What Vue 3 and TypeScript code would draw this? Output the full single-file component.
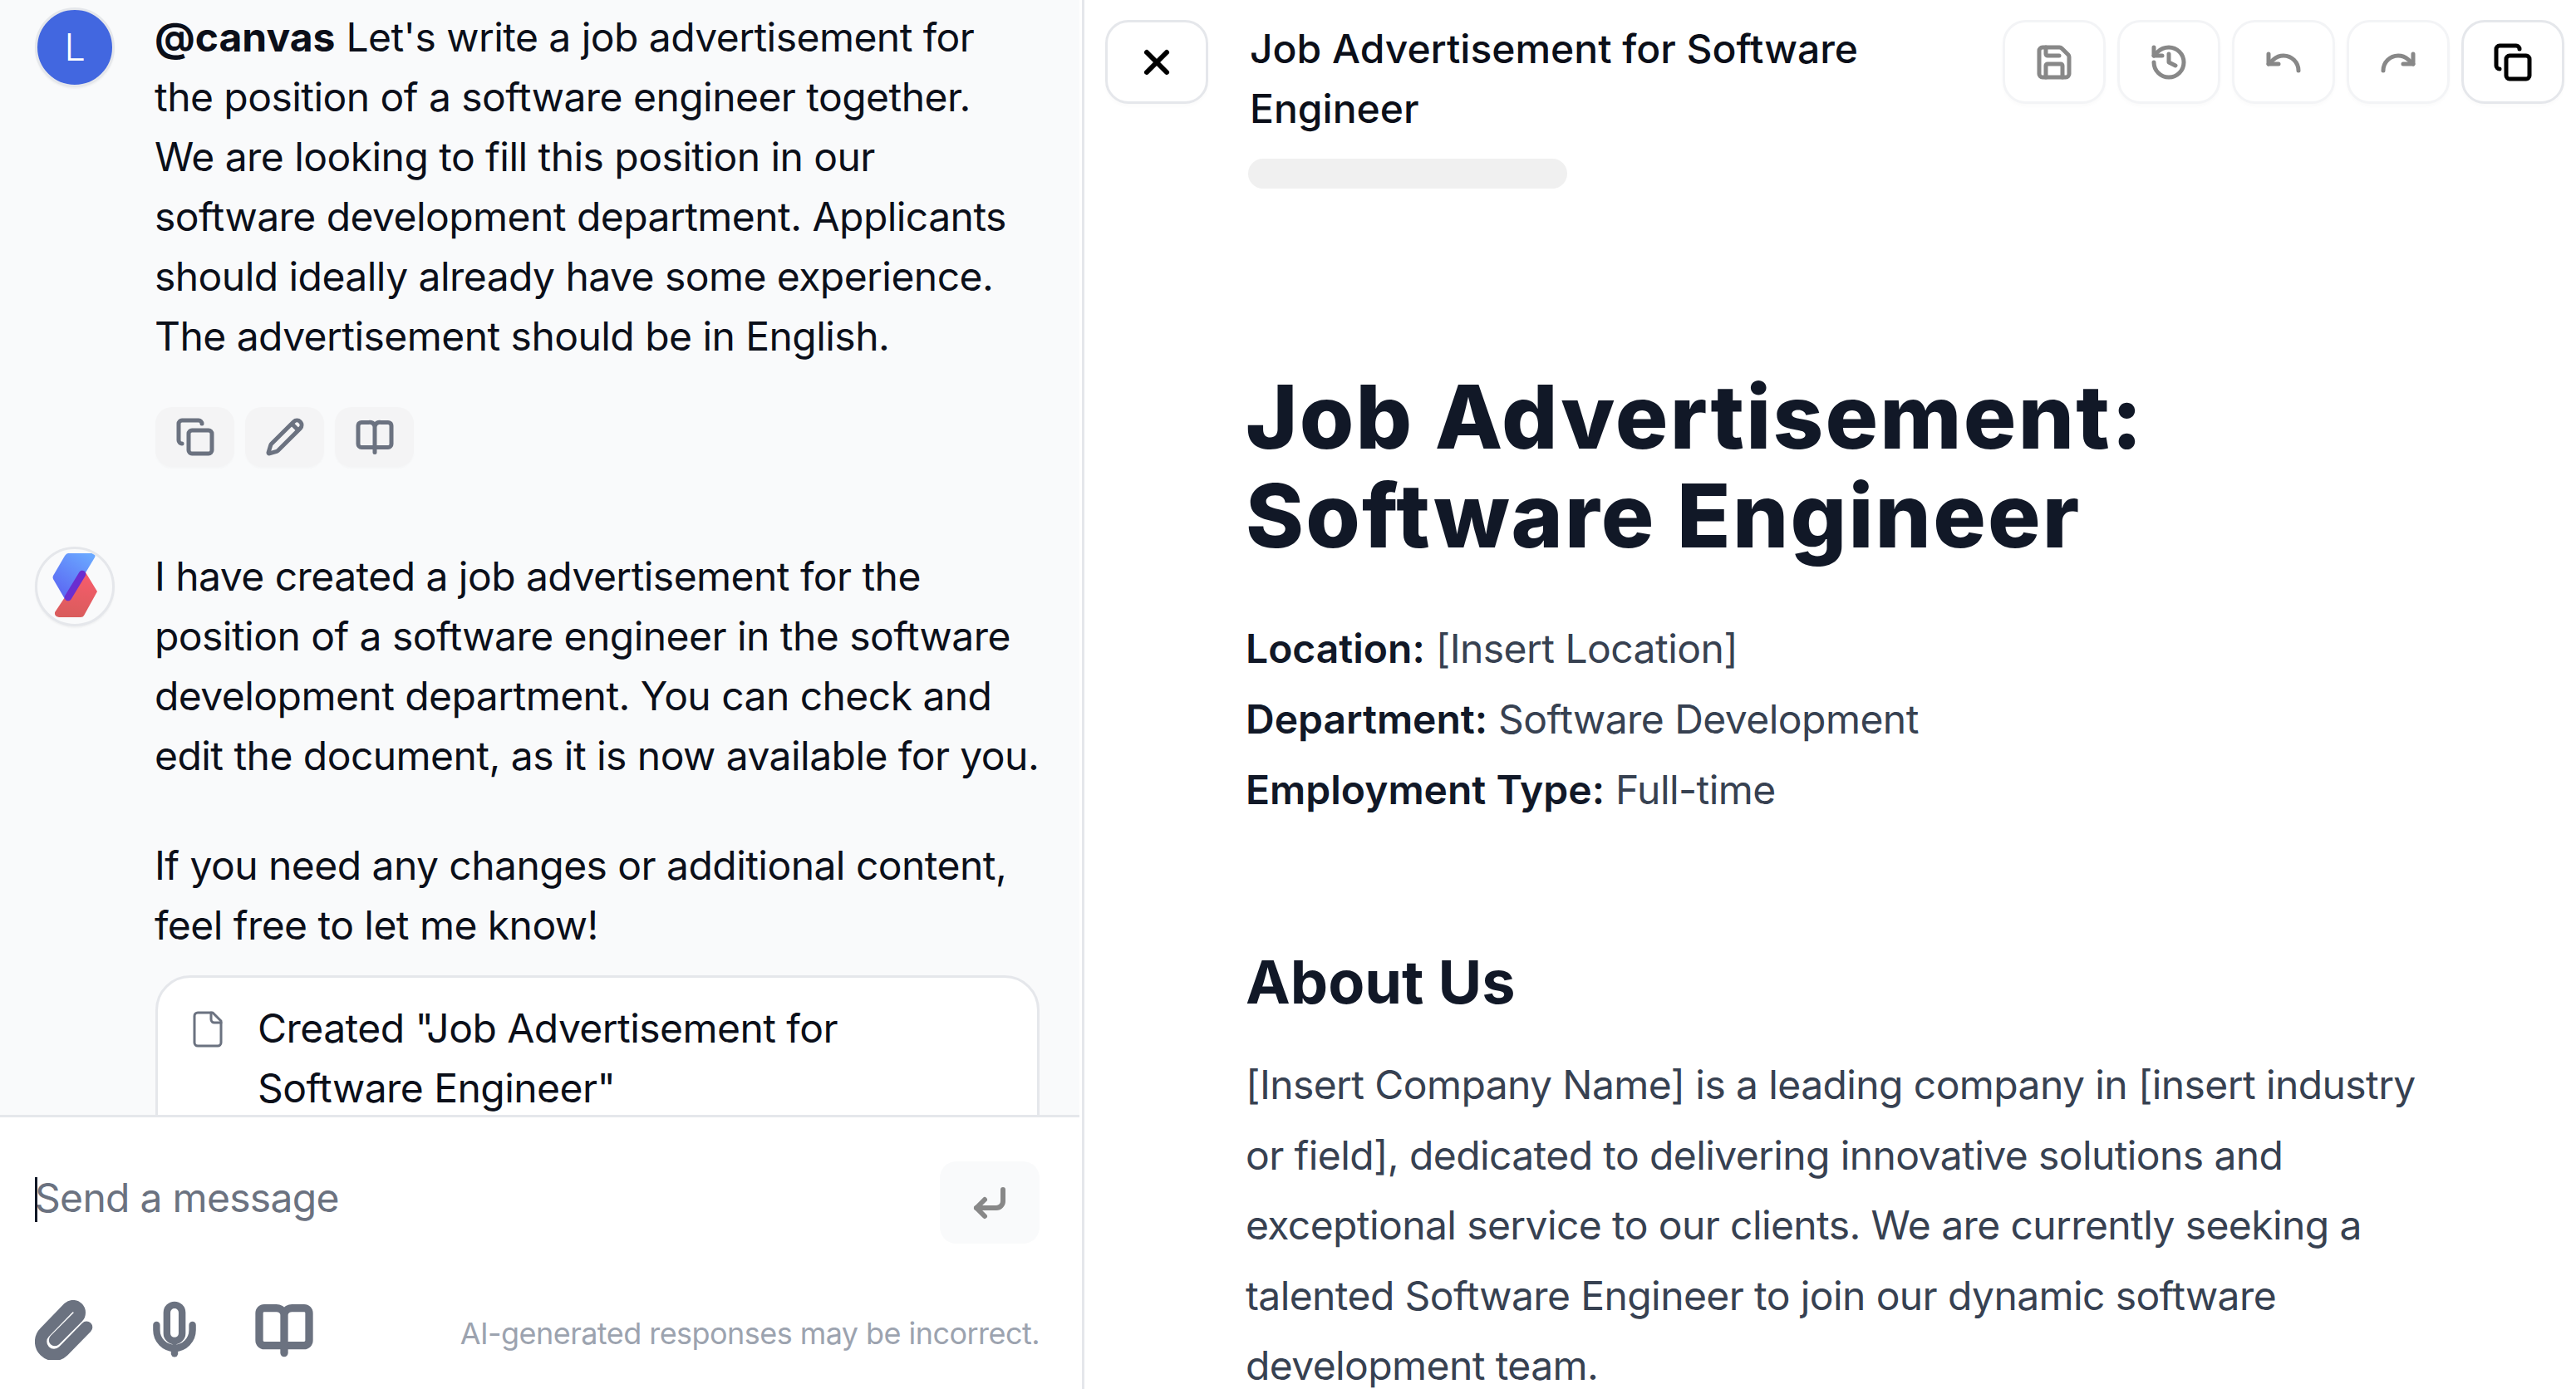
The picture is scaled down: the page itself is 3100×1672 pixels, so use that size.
<template>
  <div class="app">
    <section class="chat">
      <div class="thread">
        <article class="msg">
          <div class="avatar user">L</div>
          <div class="body">
            <p class="prompt"><strong>@canvas</strong> Let's write a job advertisement for the position of a software engineer together. We are looking to fill this position in our software development department. Applicants should ideally already have some experience. The advertisement should be in English.</p>
            <div class="msg-actions">
              <button v-for="name in msgActions" :key="name" class="msg-btn">
                <svg class="ic" viewBox="0 0 24 24"><path v-for="d in icons[name]" :key="d" :d="d" /></svg>
              </button>
            </div>
          </div>
        </article>

        <article class="msg reply">
          <div class="avatar bot">
            <svg viewBox="0 0 90 90" class="logo">
              <defs>
                <linearGradient id="lg-blue" x1="0.8" y1="0" x2="0.2" y2="1">
                  <stop offset="0" stop-color="#6aa8ff" />
                  <stop offset="1" stop-color="#5a63f2" />
                </linearGradient>
                <linearGradient id="lg-red" x1="0.6" y1="0" x2="0.5" y2="1">
                  <stop offset="0" stop-color="#f85c6c" />
                  <stop offset="1" stop-color="#d95c5c" />
                </linearGradient>
              </defs>
              <path fill="url(#lg-red)" d="M58 28 L72 51 L56 80 Q55 82 52 82 L26 82 Q20 81 21 76 L33 58 Z" />
              <path fill="url(#lg-blue)" d="M37 5 L66 5 Q71 6 69 10 L39 60 Q36 63 33 60 L19 36 Q18 34 19 32 L33 8 Q35 5 37 5 Z" />
              <path d="M54 30 L37 58" stroke="#6a2ed0" stroke-width="8.5" stroke-linecap="round" fill="none" />
            </svg>
          </div>
          <div class="body">
            <p>I have created a job advertisement for the position of a software engineer in the software development department. You can check and edit the document, as it is now available for you.</p>
            <p class="para">If you need any changes or additional content, feel free to let me know!</p>
            <div class="doc-card">
              <svg class="ic thin" viewBox="0 0 24 24"><path v-for="d in icons.file" :key="d" :d="d" /></svg>
              <span>Created "Job Advertisement for Software Engineer"</span>
            </div>
          </div>
        </article>
      </div>

      <footer class="composer">
        <div class="input-row">
          <div class="input"><i class="caret"></i>Send a message</div>
          <button class="send">
            <svg class="ic" viewBox="0 0 24 24"><path v-for="d in icons.enter" :key="d" :d="d" /></svg>
          </button>
        </div>
        <div class="tools-row">
          <div class="tools">
            <svg v-for="name in composerTools" :key="name" class="tool" :class="name" viewBox="0 0 24 24"><path v-for="d in icons[name]" :key="d" :d="d" /></svg>
          </div>
          <span class="note">AI-generated responses may be incorrect.</span>
        </div>
      </footer>
    </section>

    <section class="canvas">
      <header class="bar">
        <button class="bar-btn strong">
          <svg class="ic x" viewBox="0 0 24 24"><path v-for="d in icons.close" :key="d" :d="d" /></svg>
        </button>
        <div class="title-wrap">
          <div class="title">Job Advertisement for Software Engineer</div>
          <div class="pill"></div>
        </div>
        <div class="bar-actions">
          <button v-for="name in barActions" :key="name" class="bar-btn">
            <svg class="ic" viewBox="0 0 24 24"><path v-for="d in icons[name]" :key="d" :d="d" /></svg>
          </button>
          <button class="bar-btn strong">
            <svg class="ic dark" viewBox="0 0 24 24"><path v-for="d in icons.copy" :key="d" :d="d" /></svg>
          </button>
        </div>
      </header>

      <main class="doc">
        <h1>Job Advertisement: Software Engineer</h1>
        <div class="meta">
          <p v-for="row in meta" :key="row.label"><strong>{{ row.label }}:</strong> {{ row.value }}</p>
        </div>
        <h2>About Us</h2>
        <p class="copy">[Insert Company Name] is a leading company in [insert industry or field], dedicated to delivering innovative solutions and exceptional service to our clients. We are currently seeking a talented Software Engineer to join our dynamic software development team.</p>
      </main>
    </section>
  </div>
</template>

<script setup lang="ts">
const icons: Record<string, string[]> = {
  copy: [
    'M10 8h10a2 2 0 0 1 2 2v10a2 2 0 0 1-2 2H10a2 2 0 0 1-2-2V10a2 2 0 0 1 2-2Z',
    'M4 16c-1.1 0-2-.9-2-2V4c0-1.1.9-2 2-2h10c1.1 0 2 .9 2 2',
  ],
  pencil: [
    'M21.17 6.81a2.8 2.8 0 0 0-3.98-3.98L3.84 16.17a2 2 0 0 0-.5.83l-1.32 4.35a.5.5 0 0 0 .62.62l4.35-1.32a2 2 0 0 0 .83-.5z',
    'M16.5 4.5l3 3',
  ],
  book: [
    'M4 3.2h4.5a3.5 3.5 0 0 1 3.5 2 3.5 3.5 0 0 1 3.5-2H20a2 2 0 0 1 2 2v11a2 2 0 0 1-2 2H4a2 2 0 0 1-2-2V5.2a2 2 0 0 1 2-2Z',
    'M12 5.5v15.7',
  ],
  file: ['M15 2H6a2 2 0 0 0-2 2v16a2 2 0 0 0 2 2h12a2 2 0 0 0 2-2V7Z', 'M14 2v4a2 2 0 0 0 2 2h4'],
  enter: ['M20 4v7a4 4 0 0 1-4 4H4', 'm9 10-5 5 5 5'],
  clip: ['M20.7 10.9 11.42 20.42A5.3 5.3 0 0 1 3.92 12.92L13.53 3.03A2.65 2.65 0 0 1 17.27 6.77L8 16.05'],
  mic: [
    'M12 1.95a3.05 3.05 0 0 0-3.05 3.05v8.3a3.05 3.05 0 0 0 6.1 0V5A3.05 3.05 0 0 0 12 1.95Z',
    'M19.2 10v2a7.2 7.3 0 0 1-14.4 0v-2',
    'M12 19v2.4',
  ],
  close: ['M18 6 6 18', 'm6 6 12 12'],
  save: [
    'M15.2 3a2 2 0 0 1 1.4.6l3.8 3.8a2 2 0 0 1 .6 1.4V19a2 2 0 0 1-2 2H5a2 2 0 0 1-2-2V5a2 2 0 0 1 2-2z',
    'M17 21v-7a1 1 0 0 0-1-1H8a1 1 0 0 0-1 1v7',
    'M7 3v4a1 1 0 0 0 1 1h7',
  ],
  history: ['M3 12a9 9 0 1 0 9-9 9.75 9.75 0 0 0-6.74 2.74L3 8', 'M3 3v5h5', 'M12 7v5l4 2'],
  undo: ['M3 7v6h6', 'M21 17a9 9 0 0 0-9-9 9 9 0 0 0-6 2.3L3 13'],
  redo: ['M21 7v6h-6', 'M3 17a9 9 0 0 1 9-9 9 9 0 0 1 6 2.3l3 2.7'],
}

const msgActions = ['copy', 'pencil', 'book']
const composerTools = ['clip', 'mic', 'book']
const barActions = ['save', 'history', 'undo', 'redo']

const meta = [
  { label: 'Location', value: '[Insert Location]' },
  { label: 'Department', value: 'Software Development' },
  { label: 'Employment Type', value: 'Full-time' },
]
</script>

<style>
html,
body {
  margin: 0;
  background: #fff;
}
</style>

<style scoped>
.app {
  display: grid;
  grid-template-columns: 1299px 1fr;
  grid-template-rows: 1672px;
  width: 3100px;
  height: 1672px;
  overflow: hidden;
  font-family: Inter, "Liberation Sans", sans-serif;
  font-size: 48px;
  line-height: 72px;
  letter-spacing: -0.55px;
  color: #0b0f19;
}

button {
  display: flex;
  align-items: center;
  justify-content: center;
  padding: 0;
  font: inherit;
  cursor: pointer;
}

p {
  margin: 0;
}

strong {
  letter-spacing: 0;
}

.ic {
  width: 48px;
  height: 48px;
  fill: none;
  stroke: #6b7280;
  stroke-width: 2.5;
  stroke-linecap: round;
  stroke-linejoin: round;
}

.chat {
  display: flex;
  flex-direction: column;
  min-height: 0;
}

.thread {
  flex: 1;
  min-height: 0;
  overflow: hidden;
  padding: 9px 46px 0 42px;
  background: #f9fafb;
}

.msg {
  display: flex;
  gap: 48px;
}

.reply {
  margin-top: 96px;
}

.prompt {
  max-width: 1050px;
}

.avatar {
  flex: none;
  box-sizing: border-box;
  width: 96px;
  height: 96px;
  border: 3px solid #e5e7eb;
  border-radius: 50%;
  overflow: hidden;
  box-shadow: 0 2px 2px rgba(0, 0, 0, 0.04);
}

.user {
  display: flex;
  align-items: center;
  justify-content: center;
  background: #4267e0;
  color: #fff;
  font-size: 45px;
  font-weight: 300;
}

.bot {
  background: #f9fafb;
}

.logo {
  display: block;
  width: 90px;
  height: 90px;
}

.body {
  min-width: 0;
  flex: 1;
}

.para {
  margin-top: 60px;
}

.msg-actions {
  display: flex;
  gap: 13px;
  margin: 49px 0 0 1px;
}

.msg-btn {
  width: 95px;
  height: 72px;
  border: 0;
  border-radius: 20px;
  background: #f4f4f5;
  box-shadow: 0 2px 3px rgba(0, 0, 0, 0.02);
}

.doc-card {
  display: flex;
  gap: 36px;
  margin: 24px 2px 0 1px;
  padding: 25px 36px 40px 36px;
  border: 3px solid #e5e7eb;
  border-radius: 42px;
  background: #fff;
}

.thin {
  flex: none;
  margin-top: 13px;
  stroke-width: 1.5;
}

.composer {
  flex: none;
  height: 330px;
  box-sizing: border-box;
  border-top: 3px solid #e5e7eb;
  padding: 53px 48px 0 42px;
  background: #fff;
}

.input-row {
  display: flex;
  align-items: center;
  justify-content: space-between;
}

.input {
  position: relative;
  top: -6px;
  color: #6b7280;
  letter-spacing: -0.7px;
}

.caret {
  position: absolute;
  left: 0;
  top: 11px;
  width: 3px;
  height: 54px;
  background: #111827;
}

.send {
  width: 120px;
  height: 99px;
  border: 0;
  border-radius: 20px;
  background: #f9fafb;
}

.send .ic {
  stroke: #888;
  stroke-width: 3;
}

.tools-row {
  display: flex;
  align-items: center;
  justify-content: space-between;
  margin-top: 68px;
}

.tools {
  display: flex;
  gap: 60px;
}

.tool {
  width: 72px;
  height: 72px;
  fill: none;
  stroke: #6b7280;
  stroke-linecap: round;
  stroke-linejoin: round;
}

.clip {
  stroke-width: 4.8;
}

.mic {
  stroke-width: 2.8;
}

.book {
  stroke-width: 3.1;
}

.note {
  margin-top: 8px;
  font-size: 36px;
  line-height: 56px;
  letter-spacing: -0.55px;
  color: #9ca3af;
}

.canvas {
  min-width: 0;
  margin-left: 3px;
  border-left: 3px solid #e5e7eb;
  padding: 24px 14px 0 25px;
}

.bar {
  display: flex;
  align-items: flex-start;
  gap: 50px;
}

.bar-btn {
  flex: none;
  width: 124px;
  height: 101px;
  box-sizing: border-box;
  border: 3px solid #f3f4f6;
  border-radius: 28px;
  background: #fff;
  box-shadow: 0 3px 4px rgba(0, 0, 0, 0.02);
}

.bar-btn .ic {
  stroke: #888;
}

.bar-btn .dark,
.bar-btn .x {
  stroke: #000;
}

.bar-btn .x {
  stroke-width: 3;
}

.bar-btn.strong {
  border-color: #e5e7eb;
}

.title-wrap {
  flex: none;
  width: 800px;
  margin-top: -1px;
}

.title {
  font-weight: 500;
  letter-spacing: 0;
  color: #0b0f19;
}

.pill {
  width: 384px;
  height: 36px;
  margin-top: 24px;
  margin-left: -2px;
  border-radius: 18px;
  background: #f0f0f0;
}

.bar-actions {
  display: flex;
  gap: 14px;
  margin-left: auto;
}

.doc {
  padding: 215px 156px 0 169px;
  color: #374151;
}

h1 {
  margin: 0;
  width: 1200px;
  font-size: 106px;
  line-height: 119px;
  font-weight: 800;
  letter-spacing: 2.2px;
  color: #111827;
}

.meta {
  margin-top: 58px;
  line-height: 85px;
}

.meta strong {
  font-weight: 600;
  color: #111827;
}

h2 {
  margin: 141px 0 0;
  font-size: 72px;
  line-height: 96px;
  font-weight: 700;
  letter-spacing: 0;
  color: #111827;
}

.copy {
  margin-top: 34px;
  line-height: 84.5px;
  letter-spacing: -0.6px;
}
</style>
